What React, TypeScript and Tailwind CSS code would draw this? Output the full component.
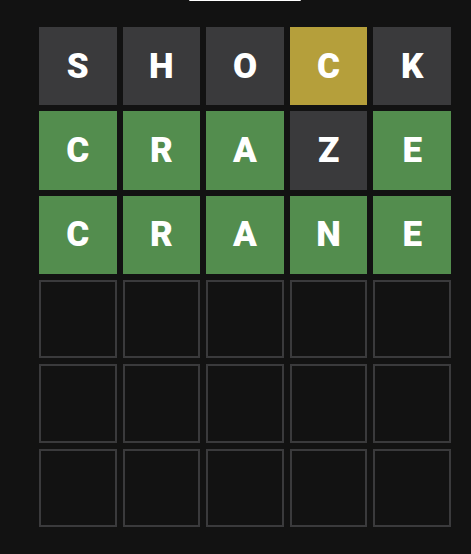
import React from "react";

type S = "absent" | "present" | "correct" | "empty";

const rows: { l: string; s: S }[][] = [
  [
    { l: "S", s: "absent" },
    { l: "H", s: "absent" },
    { l: "O", s: "absent" },
    { l: "C", s: "present" },
    { l: "K", s: "absent" },
  ],
  [
    { l: "C", s: "correct" },
    { l: "R", s: "correct" },
    { l: "A", s: "correct" },
    { l: "Z", s: "absent" },
    { l: "E", s: "correct" },
  ],
  [
    { l: "C", s: "correct" },
    { l: "R", s: "correct" },
    { l: "A", s: "correct" },
    { l: "N", s: "correct" },
    { l: "E", s: "correct" },
  ],
];

const empty = Array.from({ length: 3 }, () =>
  Array.from({ length: 5 }, () => ({ l: "", s: "empty" as S }))
);

const all = [...rows, ...empty];

function Tile({ l, s }: { l: string; s: S }) {
  const cls =
    s === "absent"
      ? "bg-[#3a3a3c]"
      : s === "present"
      ? "bg-[#b59f3b]"
      : s === "correct"
      ? "bg-[#538d4e]"
      : "border-2 border-[#3a3a3c] bg-[#121212]";
  return (
    <div
      className={`flex items-center justify-center text-white font-black text-[35px] leading-none uppercase ${cls}`}
    >
      {l}
    </div>
  );
}

export default function App() {
  return (
    <div
      className="w-[471px] h-[554px] bg-[#121212] overflow-hidden pl-[39px]"
      style={{ fontFamily: "Roboto, 'Liberation Sans', Arial, sans-serif" }}
    >
      <div className="w-[412px] flex flex-col">
        <div className="mx-auto w-[112px] h-[1px] bg-white rounded-b" />
        <div className="mt-[26px] h-[500px] grid grid-rows-6 gap-[6px]">
          {all.map((row, i) => (
            <div key={i} className="grid grid-cols-5 gap-[6px]">
              {row.map((t, j) => (
                <Tile key={j} l={t.l} s={t.s} />
              ))}
            </div>
          ))}
        </div>
      </div>
    </div>
  );
}
